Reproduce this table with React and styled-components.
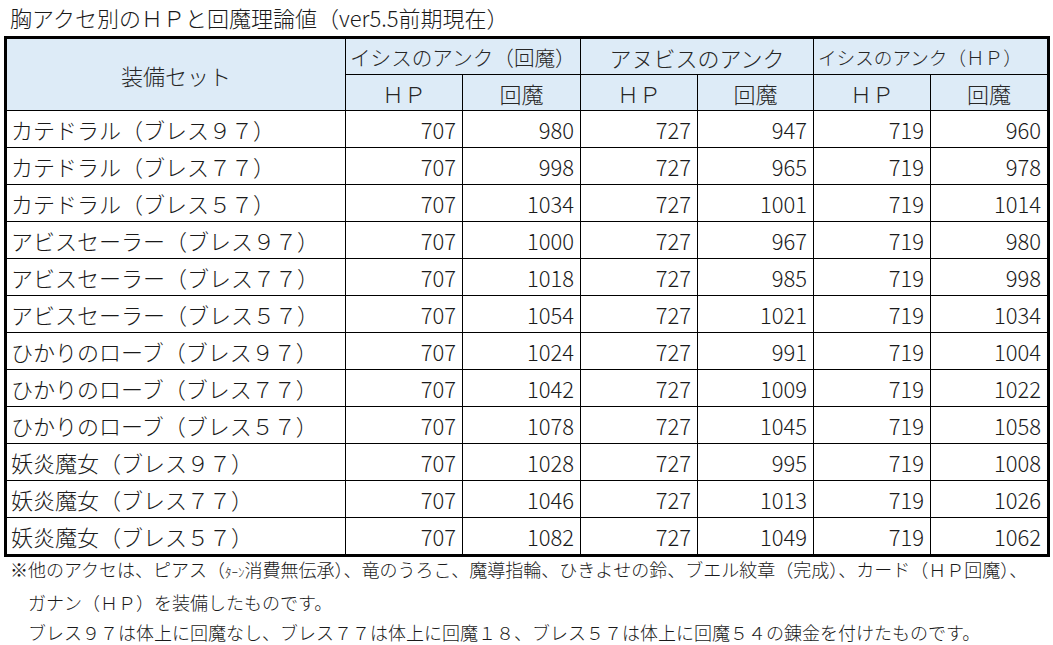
import React from 'react';
import styled, { createGlobalStyle } from 'styled-components';

const GlobalStyle = createGlobalStyle`
  html, body {
    margin: 0;
    padding: 0;
    background: #ffffff;
  }
  body {
    font-family: "Noto Sans CJK JP", "Noto Sans", sans-serif;
    font-weight: 300;
    color: #1a1a1a;
  }
`;

const Page = styled.div`
  width: 1053px;
  height: 645px;
  overflow: hidden;
  padding: 3px 0 0 4px;
  box-sizing: border-box;
`;

const Title = styled.div`
  height: 33px;
  padding-left: 6px;
  font-size: 22px;
  line-height: 29px;
  white-space: nowrap;
`;

const Frame = styled.div`
  display: inline-block;
  border: 3px solid #000;
`;

const Sheet = styled.div`
  display: grid;
  grid-template-columns: 339px 117px 118px 117px 116px 117px 116px;
  grid-template-rows: 36px 36px repeat(11, 37px) 36px;
`;

const Cell = styled.div`
  box-sizing: border-box;
  display: flex;
  align-items: center;
  white-space: nowrap;
  overflow: hidden;
  font-size: 22px;
  border-right: ${(p) => (p.$lastCol ? 'none' : '1px solid #000')};
  border-bottom: ${(p) => (p.$lastRow ? 'none' : '1px solid #000')};
`;

const HeadCell = styled(Cell)`
  background: #ddebf7;
  color: #262626;
  justify-content: ${(p) => (p.$left ? 'flex-start' : 'center')};
  padding-left: ${(p) => (p.$left ? '4px' : '0')};
  font-size: ${(p) => p.$size || 22}px;
  grid-column: ${(p) => p.$col || 'auto'};
  grid-row: ${(p) => p.$row || 'auto'};
`;

const NameCell = styled(Cell)`
  padding-left: 4px;
`;

const NumCell = styled(Cell)`
  justify-content: flex-end;
  padding-right: 6px;
`;

const Notes = styled.div`
  margin-top: -3px;
  font-size: 18px;
  line-height: 30px;
`;

const NoteLine = styled.div`
  white-space: nowrap;
  padding-left: ${(p) => (p.$indent ? '24px' : '6px')};
`;

const Tiny = styled.span`
  font-size: 13px;
`;

const rows = [
  ['カテドラル（ブレス９７）', 707, 980, 727, 947, 719, 960],
  ['カテドラル（ブレス７７）', 707, 998, 727, 965, 719, 978],
  ['カテドラル（ブレス５７）', 707, 1034, 727, 1001, 719, 1014],
  ['アビスセーラー（ブレス９７）', 707, 1000, 727, 967, 719, 980],
  ['アビスセーラー（ブレス７７）', 707, 1018, 727, 985, 719, 998],
  ['アビスセーラー（ブレス５７）', 707, 1054, 727, 1021, 719, 1034],
  ['ひかりのローブ（ブレス９７）', 707, 1024, 727, 991, 719, 1004],
  ['ひかりのローブ（ブレス７７）', 707, 1042, 727, 1009, 719, 1022],
  ['ひかりのローブ（ブレス５７）', 707, 1078, 727, 1045, 719, 1058],
  ['妖炎魔女（ブレス９７）', 707, 1028, 727, 995, 719, 1008],
  ['妖炎魔女（ブレス７７）', 707, 1046, 727, 1013, 719, 1026],
  ['妖炎魔女（ブレス５７）', 707, 1082, 727, 1049, 719, 1062],
];

const App = () => {
  return (
    <Page>
      <GlobalStyle />
      <Title>胸アクセ別のＨＰと回魔理論値（ver5.5前期現在）</Title>
      <Frame>
        <Sheet>
          <HeadCell $col="1" $row="1 / 3">装備セット</HeadCell>
          <HeadCell $col="2 / 4" $row="1" $left $size={20.6}>イシスのアンク（回魔）</HeadCell>
          <HeadCell $col="4 / 6" $row="1">アヌビスのアンク</HeadCell>
          <HeadCell $col="6 / 8" $row="1" $left $size={18.6} $lastCol>イシスのアンク（ＨＰ）</HeadCell>
          <HeadCell $col="2" $row="2">ＨＰ</HeadCell>
          <HeadCell $col="3" $row="2">回魔</HeadCell>
          <HeadCell $col="4" $row="2">ＨＰ</HeadCell>
          <HeadCell $col="5" $row="2">回魔</HeadCell>
          <HeadCell $col="6" $row="2">ＨＰ</HeadCell>
          <HeadCell $col="7" $row="2" $lastCol>回魔</HeadCell>
          {rows.map((r, i) => {
            const lastRow = i === rows.length - 1;
            return (
              <React.Fragment key={r[0]}>
                <NameCell $lastRow={lastRow}>{r[0]}</NameCell>
                {r.slice(1).map((v, j) => (
                  <NumCell key={j} $lastRow={lastRow} $lastCol={j === 5}>
                    {v}
                  </NumCell>
                ))}
              </React.Fragment>
            );
          })}
        </Sheet>
      </Frame>
      <Notes>
        <NoteLine>
          ※他のアクセは、ピアス（<Tiny>ﾀｰﾝ</Tiny>消費無伝承）、竜のうろこ、魔導指輪、ひきよせの鈴、ブエル紋章（完成）、カード（ＨＰ回魔）、
        </NoteLine>
        <NoteLine $indent>ガナン（ＨＰ）を装備したものです。</NoteLine>
        <NoteLine $indent>
          ブレス９７は体上に回魔なし、ブレス７７は体上に回魔１８、ブレス５７は体上に回魔５４の錬金を付けたものです。
        </NoteLine>
      </Notes>
    </Page>
  );
};

export default App;
